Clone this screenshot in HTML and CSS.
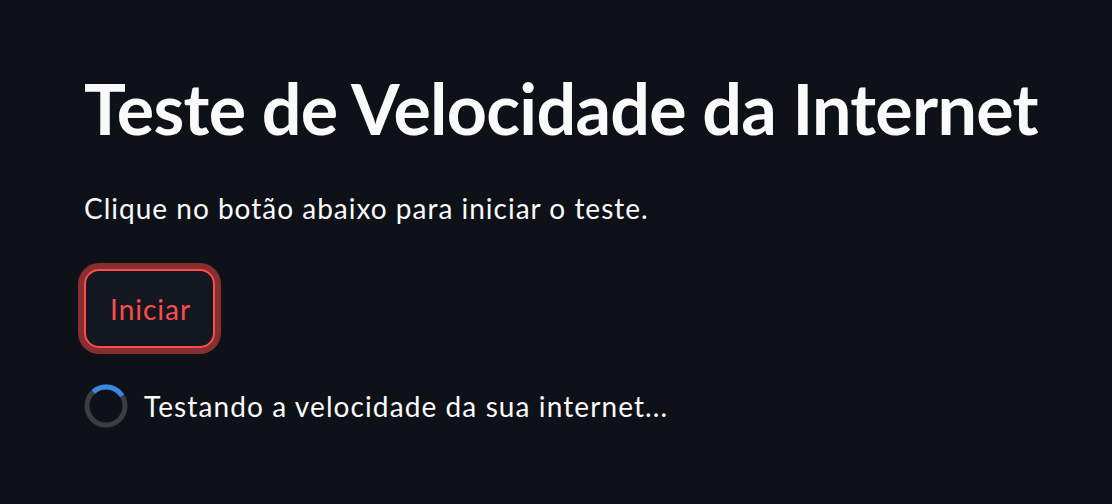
FILE: index.html
```html
<!DOCTYPE html>
<html lang="pt">
<head>
<meta charset="utf-8">
<title>Teste de Velocidade da Internet</title>
<link rel="stylesheet" href="styles.css">
</head>
<body>
<main class="app">
  <h1 class="title">Teste de Velocidade da Internet</h1>
  <p class="lead">Clique no botão abaixo para iniciar o teste.</p>
  <button class="btn" type="button">Iniciar</button>
  <div class="status">
    <svg class="spinner" width="44" height="44" viewBox="0 0 44 44" aria-hidden="true">
      <circle cx="22" cy="22" r="19" fill="none" stroke="#3b3d43" stroke-width="5"/>
      <circle cx="22" cy="22" r="19" fill="none" stroke="#3a86e0" stroke-width="5"
        stroke-dasharray="33 120" transform="rotate(-132 22 22)"/>
    </svg>
    <span class="status-text">Testando a velocidade da sua internet...</span>
  </div>
</main>
</body>
</html>
```

FILE: styles.css
```css
html, body {
  margin: 0;
  padding: 0;
  background: #0e1117;
}

.app {
  display: flex;
  flex-direction: column;
  align-items: flex-start;
  padding: 66px 0 0 84px;
  font-family: Lato, "Liberation Sans", sans-serif;
  color: #fafafa;
}

.title {
  margin: 0;
  font-size: 70px;
  line-height: 84px;
  font-weight: 700;
  letter-spacing: -0.7px;
}

.lead {
  margin: 38px 0 0 0;
  font-size: 28px;
  line-height: 40px;
  letter-spacing: 1px;
}

.btn {
  margin-top: 41px;
  box-sizing: border-box;
  height: 79px;
  padding: 0 22px 0 24px;
  display: flex;
  align-items: center;
  background: #131720;
  color: #ff4b4b;
  border: 2px solid #ff4b4b;
  border-radius: 15px;
  box-shadow: 0 0 0 6px rgba(255, 75, 75, 0.5);
  font-family: Lato, "Liberation Sans", sans-serif;
  font-size: 28px;
  line-height: 34px;
  letter-spacing: 1px;
}

.status {
  margin-top: 36px;
  display: flex;
  align-items: center;
  gap: 16px;
}

.spinner {
  display: block;
  flex: none;
}

.status-text {
  font-size: 28px;
  line-height: 40px;
  letter-spacing: 1.1px;
}
```
